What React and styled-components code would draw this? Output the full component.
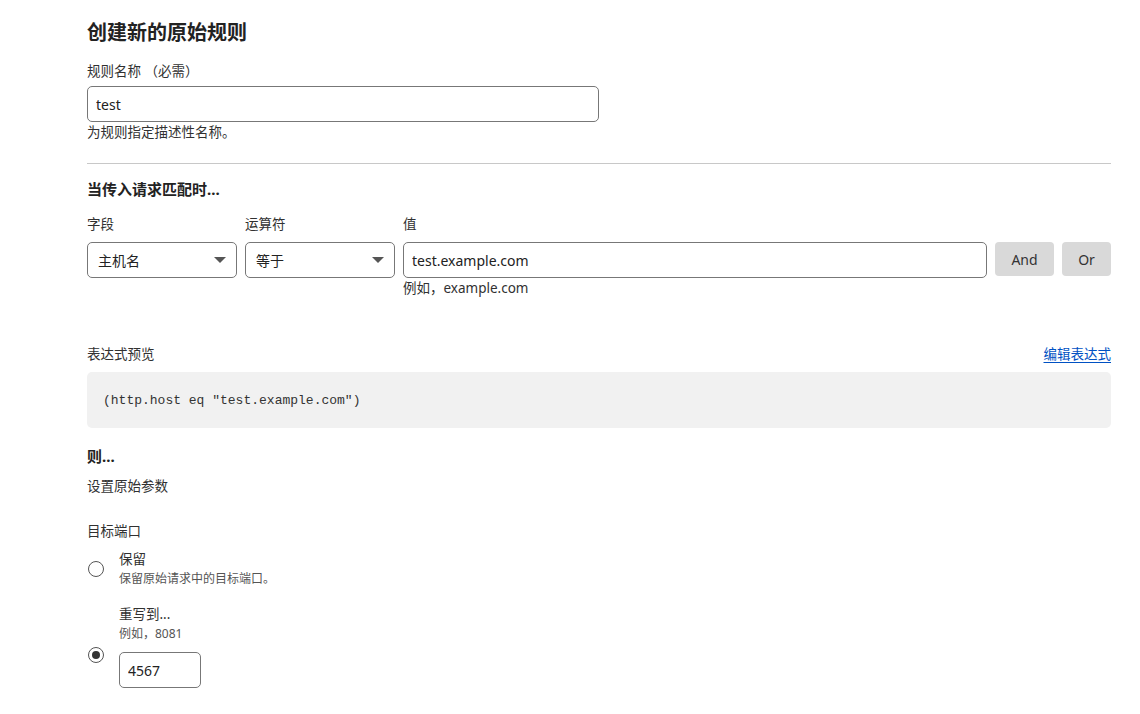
import React, { useState } from 'react';
import styled, { createGlobalStyle } from 'styled-components';

const GlobalStyle = createGlobalStyle`
  body {
    margin: 0;
    background: #fff;
    font-family: "Noto Sans", "Noto Sans CJK SC", sans-serif;
    color: #313131;
  }
`;

const Page = styled.div`
  width: 1024px;
  padding: 20px 0 0 87px;
`;

const Title = styled.h2`
  font-size: 20px;
  font-weight: 700;
  margin: 0 0 16px;
  line-height: 26px;
  color: #222;
`;

const SectionTitle = styled.h3`
  font-size: 15px;
  font-weight: 700;
  margin: 0;
  line-height: 22px;
  color: #222;
`;

const Label = styled.div`
  font-size: 13.5px;
  line-height: 18px;
  margin-bottom: ${p => p.$gap ?? 6}px;
`;

const Help = styled.div`
  font-size: ${p => p.$small ? 12 : 13.5}px;
  line-height: ${p => p.$small ? 20 : 18}px;
  color: ${p => p.$small ? '#555' : '#313131'};
`;

const TextInput = styled.input`
  box-sizing: border-box;
  width: ${p => p.$width || '100%'};
  height: 36px;
  border: 1px solid #777;
  border-radius: 5px;
  padding: 0 8px;
  font-family: "Noto Sans", sans-serif;
  font-size: 14px;
  color: #222;
  outline: none;
`;

const Divider = styled.hr`
  border: none;
  border-top: 1px solid #c8c8c8;
  margin: 22px 0 14px;
`;

const MatchRow = styled.div`
  display: flex;
  gap: 8px;
  align-items: flex-start;
  margin-top: 15px;
`;

const Field = styled.div`
  display: flex;
  flex-direction: column;
  width: ${p => p.$width ? p.$width + 'px' : 'auto'};
  flex: ${p => p.$grow ? 1 : 'none'};
`;

const SelectBox = styled.div`
  box-sizing: border-box;
  height: 36px;
  border: 1px solid #777;
  border-radius: 5px;
  padding: 0 10px;
  display: flex;
  align-items: center;
  justify-content: space-between;
  font-size: 14px;
  color: #222;
`;

const Caret = styled.span`
  width: 0;
  height: 0;
  border-left: 6px solid transparent;
  border-right: 6px solid transparent;
  border-top: 6px solid #555;
`;

const LogicButton = styled.button`
  width: ${p => p.$width}px;
  height: 34px;
  margin-top: 27px;
  padding: 0;
  border: none;
  border-radius: 4px;
  background: #d9d9d9;
  font-family: "Noto Sans", sans-serif;
  font-size: 14px;
  color: #333;
`;

const PreviewHead = styled.div`
  display: flex;
  justify-content: space-between;
  align-items: center;
  margin-top: 48px;
  margin-bottom: 9px;
`;

const EditLink = styled.a`
  font-size: 13.5px;
  line-height: 18px;
  color: #0051c3;
  text-decoration: underline;
  text-underline-offset: 3px;
  cursor: pointer;
`;

const CodeBox = styled.div`
  background: #f1f1f1;
  border-radius: 5px;
  height: 56px;
  padding: 0 16px;
  display: flex;
  align-items: center;
  font-family: "Liberation Mono", "DejaVu Sans Mono", monospace;
  font-size: 13px;
  color: #333;
`;

const RadioRow = styled.label`
  display: flex;
  align-items: ${p => p.$bottom ? 'flex-end' : 'center'};
  gap: 15px;
  margin-top: ${p => p.$mt}px;
`;

const RadioDot = styled.span`
  box-sizing: border-box;
  width: 16px;
  height: 16px;
  border-radius: 50%;
  border: 1px solid #555;
  margin-left: 1px;
  margin-bottom: ${p => p.$bottom ? 25 : 0}px;
  display: flex;
  align-items: center;
  justify-content: center;
  &::after {
    content: '';
    width: 8px;
    height: 8px;
    border-radius: 50%;
    background: ${p => p.$checked ? '#333' : 'transparent'};
  }
`;

const OptionText = styled.div`
  font-size: 13.5px;
  line-height: 20px;
`;

export default function App() {
  const [port, setPort] = useState('rewrite');
  return (
    <Page>
      <GlobalStyle />
      <Title>创建新的原始规则</Title>
      <Label $gap={6}>规则名称 （必需）</Label>
      <TextInput $width="512px" defaultValue="test" />
      <Help style={{ marginTop: 1 }}>为规则指定描述性名称。</Help>

      <Divider />

      <SectionTitle>当传入请求匹配时...</SectionTitle>
      <MatchRow>
        <Field $width={150}>
          <Label $gap={9}>字段</Label>
          <SelectBox>主机名<Caret /></SelectBox>
        </Field>
        <Field $width={150}>
          <Label $gap={9}>运算符</Label>
          <SelectBox>等于<Caret /></SelectBox>
        </Field>
        <Field $grow>
          <Label $gap={9}>值</Label>
          <TextInput defaultValue="test.example.com" />
          <Help style={{ marginTop: 1 }}>例如，example.com</Help>
        </Field>
        <LogicButton $width={59}>And</LogicButton>
        <LogicButton $width={49}>Or</LogicButton>
      </MatchRow>

      <PreviewHead>
        <Label $gap={0}>表达式预览</Label>
        <EditLink>编辑表达式</EditLink>
      </PreviewHead>
      <CodeBox>(http.host eq "test.example.com")</CodeBox>

      <SectionTitle style={{ marginTop: 17 }}>则...</SectionTitle>
      <Label style={{ marginTop: 10 }}>设置原始参数</Label>
      <Label style={{ marginTop: 27 }}>目标端口</Label>

      <RadioRow $mt={9} onClick={() => setPort('keep')}>
        <RadioDot $checked={port === 'keep'} />
        <div>
          <OptionText>保留</OptionText>
          <Help $small>保留原始请求中的目标端口。</Help>
        </div>
      </RadioRow>
      <RadioRow $mt={15} $bottom onClick={() => setPort('rewrite')}>
        <RadioDot $bottom $checked={port === 'rewrite'} />
        <div>
          <OptionText>重写到...</OptionText>
          <Help $small style={{ marginBottom: 8 }}>例如，8081</Help>
          <TextInput $width="82px" defaultValue="4567" />
        </div>
      </RadioRow>
    </Page>
  );
}
